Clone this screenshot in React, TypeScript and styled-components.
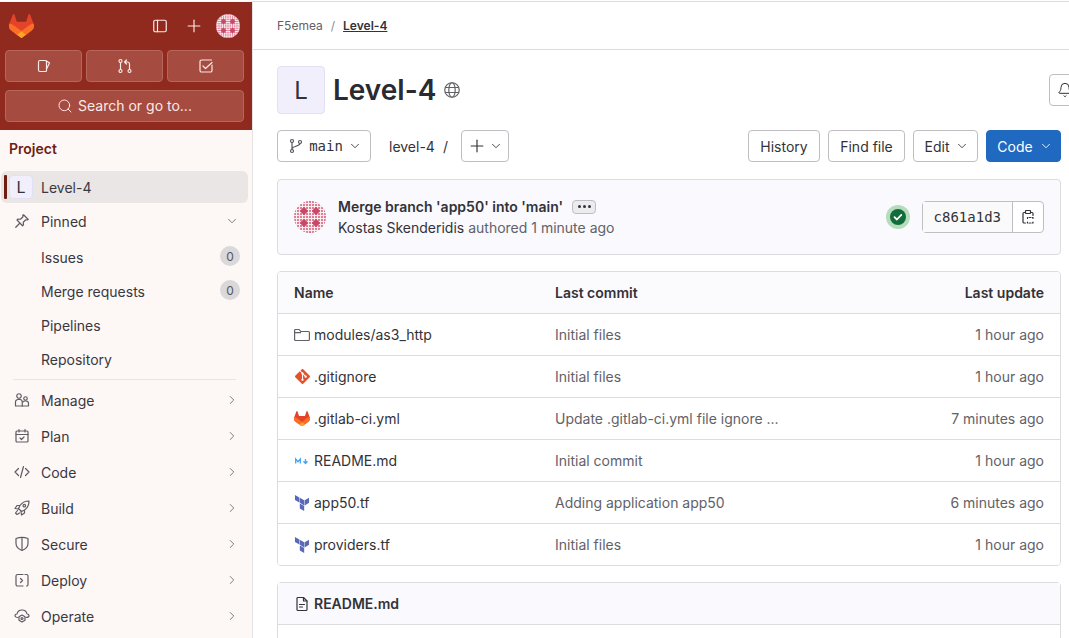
import React from 'react';
import styled, { createGlobalStyle } from 'styled-components';
import { ChevronDown, ChevronRight, Plus, Search, Bell } from 'lucide-react';
import { SiGit } from 'react-icons/si';

const GlobalStyle = createGlobalStyle`
  html, body {
    margin: 0;
    height: 100%;
    overflow: hidden;
    background: #fff;
    font-family: Inter, "Noto Sans", sans-serif;
    color: #333238;
  }
  #root {
    height: 100%;
  }
  * {
    box-sizing: border-box;
  }
`;

const Page = styled.div`
  display: flex;
  height: 638px;
  padding-top: 1px;
  overflow: hidden;
`;

const Sidebar = styled.aside`
  flex: 0 0 253px;
  background: #fdf7f6;
  border-right: 1px solid #e4e2e2;
  overflow: hidden;
`;

const SidebarTop = styled.div`
  background: #902a1e;
  height: 128px;
  margin-top: 1px;
  padding: 12px 8px 8px 5px;
`;

const TopRow = styled.div`
  display: flex;
  align-items: center;
  height: 24px;
  padding-left: 4px;
  color: #fbe9e6;
`;

const TopIcons = styled.div`
  display: flex;
  align-items: center;
  margin-left: auto;
  gap: 12px;
  padding-right: 4px;
`;

const PanelSlot = styled.span`
  display: flex;
  margin-right: 4px;
`;

const IconGrid = styled.div`
  display: grid;
  grid-template-columns: repeat(3, 77px);
  gap: 4px;
  margin-top: 12px;
`;

const HeaderButton = styled.button`
  display: flex;
  align-items: center;
  justify-content: center;
  gap: 5px;
  height: 32px;
  padding: 0;
  background: #a54b40;
  border: 1px solid #b7665c;
  border-radius: 4px;
  color: #fbe9e6;
  font: 400 14px Inter, sans-serif;
`;

const SearchButton = styled(HeaderButton)`
  width: 239px;
  margin-top: 8px;
  padding-bottom: 1px;
`;

const SectionTitle = styled.div`
  margin-top: 10px;
  padding-left: 9px;
  height: 18px;
  line-height: 18px;
  font-size: 14px;
  font-weight: 600;
  color: #6f1d12;
`;

const NavList = styled.nav`
  display: flex;
  flex-direction: column;
  margin-top: 13px;
  padding-left: 1px;
`;

const NavRow = styled.div<{ $height?: number; $active?: boolean }>`
  display: flex;
  align-items: center;
  height: ${(p) => p.$height ?? 36}px;
  width: 247px;
  padding: 0 9px 0 13px;
  border-radius: 6px;
  font-size: 14px;
  color: #3a383f;
  background: ${(p) => (p.$active ? '#e9e6e5' : 'transparent')};
`;

const ActiveRow = styled(NavRow)`
  padding-left: 3px;
`;

const PinnedRow = styled(NavRow)`
  margin-bottom: 1px;
`;

const ActiveBar = styled.span`
  width: 3px;
  height: 24px;
  border-radius: 1px;
  background: #6f1d12;
  margin-right: 2px;
`;

const NavIconSlot = styled.span`
  display: flex;
  flex: 0 0 16px;
  align-items: center;
  justify-content: center;
  margin-right: 11px;
  color: #5e5c63;
`;

const NavLabel = styled.span`
  flex: 1;
`;

const ActiveLabel = styled(NavLabel)`
  margin-left: 8px;
`;

const SubItem = styled(NavRow)`
  padding: 0 8px 0 40px;
`;

const CountBadge = styled.span`
  display: flex;
  align-items: center;
  justify-content: center;
  width: 20px;
  height: 20px;
  margin-top: -2px;
  border-radius: 50%;
  background: #d9d8da;
  color: #57555c;
  font-size: 12px;
`;

const NavDivider = styled.hr`
  width: 223px;
  margin: 3px 0 2px 12px;
  border: 0;
  border-top: 1px solid #e9e3e2;
`;

const ProjectTile = styled.span<{ $size: number }>`
  display: flex;
  flex: 0 0 auto;
  align-items: center;
  justify-content: center;
  width: ${(p) => p.$size}px;
  height: ${(p) => p.$size}px;
  border-radius: 4px;
  background: #f0effb;
  border: 1px solid #e2e0f3;
  color: #333238;
  font-size: ${(p) => (p.$size > 30 ? 24 : 16)}px;
`;

const Main = styled.main`
  flex: 1;
  min-width: 0;
  overflow: hidden;
  border-top: 1px solid #dcdcde;
`;

const Breadcrumbs = styled.div`
  display: flex;
  align-items: center;
  height: 48px;
  padding-left: 24px;
  border-bottom: 1px solid #dcdcde;
  font-size: 12px;
  color: #626168;
`;

const CrumbSep = styled.span`
  margin: 0 8px;
  color: #89888d;
`;

const CrumbCurrent = styled.span`
  color: #333238;
  font-weight: 600;
  text-decoration: underline;
`;

const Content = styled.div`
  padding: 16px 8px 0 24px;
`;

const TitleRow = styled.div`
  display: flex;
  align-items: center;
  height: 48px;
  margin-right: -20px;
`;

const Title = styled.h1`
  margin: 0 0 0 8px;
  font-size: 28px;
  font-weight: 600;
  color: #2b2a30;
`;

const GlobeWrap = styled.span`
  display: flex;
  margin-left: 8px;
  color: #626168;
`;

const BellButton = styled.button`
  display: flex;
  align-items: center;
  justify-content: center;
  width: 32px;
  height: 32px;
  margin-left: auto;
  padding: 0;
  background: #fff;
  border: 1px solid #bfbfc3;
  border-radius: 4px;
  color: #333238;
`;

const Toolbar = styled.div`
  display: flex;
  align-items: center;
  margin-top: 16px;
  height: 32px;
`;

const Button = styled.button<{ $width: number; $primary?: boolean; $gap?: number; $shift?: number }>`
  display: flex;
  align-items: center;
  justify-content: center;
  gap: ${(p) => p.$gap ?? 6}px;
  width: ${(p) => p.$width}px;
  height: 32px;
  padding: 0 0 0 ${(p) => p.$shift ?? 0}px;
  background: ${(p) => (p.$primary ? '#1f69c0' : '#fff')};
  border: 1px solid ${(p) => (p.$primary ? '#1f69c0' : '#bfbfc3')};
  border-radius: 4px;
  color: ${(p) => (p.$primary ? '#fff' : '#333238')};
  font: 400 14px Inter, sans-serif;
`;

const Mono = styled.span`
  font-family: "DejaVu Sans Mono", "Liberation Mono", monospace;
  font-size: 14px;
`;

const PathText = styled.span`
  margin-left: 18px;
  font-size: 14px;
  color: #333238;
`;

const PathSlash = styled.span`
  margin: 0 13px 0 8px;
  font-size: 14px;
`;

const ToolbarRight = styled.div`
  display: flex;
  gap: 8px;
  margin-left: auto;
`;

const CommitBox = styled.section`
  display: flex;
  align-items: center;
  height: 76px;
  margin-top: 17px;
  padding: 0 16px;
  background: #f9f9fe;
  border: 1px solid #dcdcde;
  border-radius: 4px;
`;

const CommitText = styled.div`
  margin-left: 12px;
  margin-top: -2px;
`;

const CommitTitle = styled.div`
  display: flex;
  align-items: center;
  gap: 9px;
  height: 20px;
  font-size: 14px;
  font-weight: 600;
`;

const Ellipsis = styled.span`
  display: flex;
  align-items: center;
  justify-content: center;
  gap: 2px;
  width: 24px;
  height: 14px;
  background: #ececef;
  border: 1px solid #bfbfc3;
  border-radius: 4px;
`;

const Dot = styled.i`
  width: 3px;
  height: 3px;
  border-radius: 50%;
  background: #333238;
`;

const CommitMeta = styled.div`
  margin-top: 2px;
  font-size: 14px;
  color: #626168;
`;

const Author = styled.span`
  color: #333238;
`;

const CommitRight = styled.div`
  display: flex;
  align-items: center;
  margin-left: auto;
`;

const StatusHalo = styled.span`
  display: flex;
  align-items: center;
  justify-content: center;
  width: 24px;
  height: 24px;
  margin-right: 12px;
  border-radius: 50%;
  background: #b5dcbc;
`;

const ShaGroup = styled.div`
  display: flex;
  height: 32px;
  background: #fff;
  border: 1px solid #bfbfc3;
  border-radius: 4px;
`;

const Sha = styled(Mono)`
  display: flex;
  align-items: center;
  padding: 0 11px;
  border-right: 1px solid #bfbfc3;
  background: #fafafa;
`;

const CopyCell = styled.span`
  display: flex;
  align-items: center;
  justify-content: center;
  width: 30px;
`;

const FileTable = styled.div`
  margin-top: 16px;
  border: 1px solid #dcdcde;
  border-radius: 4px;
  overflow: hidden;
`;

const FileRow = styled.div<{ $header?: boolean }>`
  display: grid;
  grid-template-columns: 261px 1fr auto;
  align-items: center;
  height: ${(p) => (p.$header ? 41 : 42)}px;
  padding: 0 16px;
  background: ${(p) => (p.$header ? '#fbfafd' : '#fff')};
  font-size: 14px;
  font-weight: ${(p) => (p.$header ? 600 : 400)};
  & + & {
    border-top: 1px solid #dcdcde;
  }
`;

const FileName = styled.span`
  display: flex;
  align-items: center;
  gap: 4px;
  color: #333238;
`;

const FileIconSlot = styled.span`
  display: flex;
  flex: 0 0 16px;
  align-items: center;
  justify-content: center;
`;

const Muted = styled.span`
  color: #626168;
`;

const ReadmeBox = styled.section`
  margin-top: 16px;
  height: 80px;
  border: 1px solid #dcdcde;
  border-radius: 4px;
`;

const ReadmeHeader = styled.div`
  display: flex;
  align-items: center;
  gap: 4px;
  height: 42px;
  padding: 0 16px;
  background: #f9f9fe;
  border-bottom: 1px solid #dcdcde;
  font-size: 14px;
  font-weight: 600;
`;

type IconProps = { size?: number; color?: string };

const Stroke: React.FC<React.PropsWithChildren<IconProps>> = ({ size = 16, color = 'currentColor', children }) => (
  <svg width={size} height={size} viewBox="0 0 16 16" fill="none" stroke={color} strokeWidth={1.2} strokeLinecap="round" strokeLinejoin="round">
    {children}
  </svg>
);

const Tanuki: React.FC<{ size?: number }> = ({ size = 25 }) => (
  <svg width={size} height={(size * 24) / 25} viewBox="0 0 25 24">
    <path fill="#E24329" d="m24.507 9.5-.034-.09L21.082.562a.896.896 0 0 0-1.694.091l-2.29 7.01H7.825L5.535.653a.898.898 0 0 0-1.694-.09L.451 9.411.416 9.5a6.297 6.297 0 0 0 2.09 7.278l.012.01.03.022 5.16 3.867 2.56 1.935 1.554 1.176a1.051 1.051 0 0 0 1.268 0l1.555-1.176 2.56-1.935 5.197-3.89.014-.01A6.297 6.297 0 0 0 24.507 9.5Z" />
    <path fill="#FC6D26" d="m24.507 9.5-.034-.09a11.44 11.44 0 0 0-4.56 2.051l-7.447 5.632 4.742 3.584 5.197-3.89.014-.01A6.297 6.297 0 0 0 24.507 9.5Z" />
    <path fill="#FCA326" d="m7.707 20.677 2.56 1.935 1.555 1.176a1.051 1.051 0 0 0 1.268 0l1.555-1.176 2.56-1.935-4.743-3.584-4.755 3.584Z" />
    <path fill="#FC6D26" d="M5.01 11.461a11.43 11.43 0 0 0-4.56-2.05L.416 9.5a6.297 6.297 0 0 0 2.09 7.278l.012.01.03.022 5.16 3.867 4.745-3.584-7.444-5.632Z" />
  </svg>
);

// the default identicon: a dot grid with four dark diamonds round the middle
const Identicon: React.FC<{ size: number }> = ({ size }) => {
  const dots: React.ReactNode[] = [];
  for (let y = 0; y < 11; y++) {
    for (let x = 0; x < 11; x++) {
      dots.push(<circle key={`${x}-${y}`} cx={x * 3 + 1} cy={y * 3 + 1} r={1.1} fill="#d8637f" />);
    }
  }
  const clipId = `avatar-clip-${size}`;
  return (
    <svg width={size} height={size} viewBox="0 0 32 32">
      <clipPath id={clipId}>
        <circle cx="16" cy="16" r="16" />
      </clipPath>
      <g clipPath={`url(#${clipId})`}>
        <rect width="32" height="32" fill="#fbeef1" />
        {dots}
        {[10, 22].map((cx) =>
          [10, 22].map((cy) => (
            <rect key={`${cx}-${cy}`} x={cx - 3} y={cy - 3} width="6" height="6" fill="#c9486a" transform={`rotate(45 ${cx} ${cy})`} />
          )),
        )}
      </g>
    </svg>
  );
};

const GlobeIcon = () => (
  <Stroke>
    <circle cx="8" cy="8" r="7.25" />
    <ellipse cx="8" cy="8" rx="3.2" ry="7.25" />
    <path d="M1.500 5.500h13M1.500 10.500h13" />
  </Stroke>
);

const PanelIcon = () => (
  <Stroke>
    <rect x="1.75" y="2.25" width="12.5" height="11.5" rx="1.5" />
    <path d="M5.5 2.25v11.5" />
  </Stroke>
);

const IssueIcon = () => (
  <Stroke>
    <path d="M2.5 4a1.5 1.5 0 0 1 1.5-1.5h5A1.5 1.5 0 0 1 10.5 4v8.5a1 1 0 0 1-1 1H4a1.5 1.5 0 0 1-1.5-1.5z" />
    <path d="M10.500 3l3 2-3 6" />
  </Stroke>
);

const MergeIcon = () => (
  <Stroke>
    <circle cx="3.5" cy="3" r="1.5" />
    <circle cx="3.5" cy="13" r="1.5" />
    <circle cx="12.5" cy="13" r="1.5" />
    <path d="M3.500 4.500v7M12.500 11.500V6a2 2 0 0 0-2-2H8M9.500 2 7.500 4l2 2" />
  </Stroke>
);

const TodoIcon = () => (
  <Stroke>
    <path d="M14 7v5.500a1.500 1.500 0 0 1-1.500 1.500h-9A1.500 1.500 0 0 1 2 12.500v-9A1.500 1.500 0 0 1 3.500 2h10" />
    <path d="m5 8 2.500 2.500L14 4.500" />
  </Stroke>
);

const PinIcon = () => (
  <Stroke>
    <path d="M9.500 1.750 14.250 6.500l-1 .500-1.500-.250-2.500 2.500.250 2.500-1 1L3 7l1-1 2.500.250 2.500-2.500-.250-1.500z" />
    <path d="M5.500 10.500 1.750 14.250" />
  </Stroke>
);

const PeopleIcon = () => (
  <Stroke>
    <circle cx="5" cy="4" r="2.250" />
    <path d="M1.500 14V10a2.500 2.500 0 0 1 2.500-2.500h2A2.500 2.500 0 0 1 8.250 10v4z" />
    <circle cx="11.500" cy="6.500" r="1.750" />
    <path d="M8.250 14h6.250v-2.500a2.500 2.500 0 0 0-2.500-2.500h-1a2.500 2.500 0 0 0-2 1" />
  </Stroke>
);

const PlanIcon = () => (
  <Stroke>
    <rect x="2" y="3" width="12" height="11" rx="1" />
    <path d="M2 6.500h12M5 1.500V4M11 1.500V4M6 10l1.500 1.500L10 9" />
  </Stroke>
);

const CodeIcon = () => (
  <Stroke>
    <path d="M4.500 4.500 1 8l3.500 3.500M11.500 4.500 15 8l-3.500 3.500M9.500 2.500l-3 11" />
  </Stroke>
);

const BuildIcon = () => (
  <Stroke>
    <path d="M15 1c-4 0-7 1.500-9 4.500L4.500 8.500l3 3 3-1.500C13.500 8 15 5 15 1z" />
    <circle cx="10.300" cy="5.700" r="1.250" />
    <path d="M5.500 5.500H3L1 8.500l3.500.500M10.500 10.500V13l-3 2-.500-3.500M3.500 10.500 1.500 13l1.500 1.500 2.500-1.500" />
  </Stroke>
);

const ShieldIcon = () => (
  <Stroke>
    <path d="M2 2.500c4-1.500 8-1.500 12 0v5c0 3-2.500 5.500-6 7-3.500-1.500-6-4-6-7z" />
    <path d="M8 2v12" />
  </Stroke>
);

const DeployIcon = () => (
  <Stroke>
    <path d="M2 6V4a1.500 1.500 0 0 1 1.500-1.500H9M2 6v6.500A1.500 1.500 0 0 0 3.500 14H9M14 4.500v8a1.500 1.500 0 0 1-1.500 1.500M11 2.500h1.500A1.500 1.500 0 0 1 14 4M6.500 6.500 8.500 8.500l-2 2" />
  </Stroke>
);

const OperateIcon = () => (
  <Stroke>
    <path d="M4 9.500C2 9.500 1 8.500 1 7.500 1 6.500 2 6 3 6c.5-2.500 2.500-4 5-4s4.500 1.500 5 4c1 0 2 .5 2 1.500s-1 2-3 2" />
    <path d="M8 7l3 1.750v3.500L8 14l-3-1.750v-3.500z" />
    <circle cx="8" cy="10.500" r="1" />
  </Stroke>
);

const FolderIcon = () => (
  <Stroke color="#626168">
    <path d="M.6 3.500a1 1 0 0 1 1-1h3.600l1.500 2h7.700a1 1 0 0 1 1 1v7a1 1 0 0 1-1 1H1.600a1 1 0 0 1-1-1z" />
    <path d="M.6 5.700h6" />
  </Stroke>
);

const MarkdownIcon = () => (
  <svg width="16" height="16" viewBox="0 0 16 16" fill="none" stroke="#42a5f5" strokeWidth="1.300">
    <path d="M1.700 10.500V6l2.300 2.700L6.300 6v4.500" />
    <path d="M11.500 6v4M9.500 8.300l2 2.200 2-2.200" />
  </svg>
);

const TerraformIcon = () => (
  <svg width="16" height="16" viewBox="0 0 24 24" fill="#5a68b8">
    <path d="M1.440 0v7.575l6.561 3.790V3.787zm21.120 4.227l-6.561 3.791v7.574l6.560-3.787zM8.720 4.230v7.575l6.561 3.787V8.018zm0 8.405v7.575L15.280 24v-7.578z" />
  </svg>
);

const ClipboardIcon = () => (
  <Stroke>
    <path d="M5.500 3.500H4a1 1 0 0 0-1 1V13a1 1 0 0 0 1 1h1.500M10.500 3.500H12a1 1 0 0 1 1 1v2" />
    <rect x="5.500" y="1.500" width="5" height="3" rx=".5" />
    <path d="M8 8.500h-.500v1M12 8.500h1v1M13 13v1h-1M8 14h-.500v-1M9.500 8.500h1M9.500 14h1" />
  </Stroke>
);

const BranchIcon = () => (
  <Stroke color="#56555c">
    <circle cx="4" cy="3" r="1.500" />
    <circle cx="4" cy="13" r="1.500" />
    <circle cx="12" cy="4" r="1.500" />
    <path d="M4 4.500v7M12 5.500c0 3-8 2.500-8 5.500" />
  </Stroke>
);

const DocIcon = () => (
  <Stroke>
    <path d="M3 2.500a1 1 0 0 1 1-1h5.500L13 5v8.500a1 1 0 0 1-1 1H4a1 1 0 0 1-1-1z" />
    <path d="M9.500 1.500V5H13M5.500 8.500h5M5.500 11h3" />
  </Stroke>
);

const StatusCheck = () => (
  <svg width="16" height="16" viewBox="0 0 16 16">
    <circle cx="8" cy="8" r="8" fill="#126b3a" />
    <path d="m4.500 8.200 2.400 2.300 4.400-4.600" fill="none" stroke="#fff" strokeWidth="1.800" strokeLinecap="round" strokeLinejoin="round" />
  </svg>
);

const sections: { label: string; icon: React.ReactNode }[] = [
  { label: 'Manage', icon: <PeopleIcon /> },
  { label: 'Plan', icon: <PlanIcon /> },
  { label: 'Code', icon: <CodeIcon /> },
  { label: 'Build', icon: <BuildIcon /> },
  { label: 'Secure', icon: <ShieldIcon /> },
  { label: 'Deploy', icon: <DeployIcon /> },
  { label: 'Operate', icon: <OperateIcon /> },
];

const files: { name: string; icon: React.ReactNode; commit: string; updated: string }[] = [
  { name: 'modules/as3_http', icon: <FolderIcon />, commit: 'Initial files', updated: '1 hour ago' },
  { name: '.gitignore', icon: <SiGit size={15} color="#e2512d" />, commit: 'Initial files', updated: '1 hour ago' },
  { name: '.gitlab-ci.yml', icon: <Tanuki size={16} />, commit: 'Update .gitlab-ci.yml file ignore ...', updated: '7 minutes ago' },
  { name: 'README.md', icon: <MarkdownIcon />, commit: 'Initial commit', updated: '1 hour ago' },
  { name: 'app50.tf', icon: <TerraformIcon />, commit: 'Adding application app50', updated: '6 minutes ago' },
  { name: 'providers.tf', icon: <TerraformIcon />, commit: 'Initial files', updated: '1 hour ago' },
];

export default function App() {
  return (
    <>
      <GlobalStyle />
      <Page>
        <Sidebar>
          <SidebarTop>
            <TopRow>
              <Tanuki />
              <TopIcons>
                <PanelSlot><PanelIcon /></PanelSlot>
                <Plus size={20} strokeWidth={1.4} />
                <Identicon size={24} />
              </TopIcons>
            </TopRow>
            <IconGrid>
              <HeaderButton aria-label="Issues"><IssueIcon /></HeaderButton>
              <HeaderButton aria-label="Merge requests"><MergeIcon /></HeaderButton>
              <HeaderButton aria-label="To-do items"><TodoIcon /></HeaderButton>
            </IconGrid>
            <SearchButton>
              <Search size={16} strokeWidth={1.5} />
              Search or go to...
            </SearchButton>
          </SidebarTop>
          <SectionTitle>Project</SectionTitle>
          <NavList>
            <ActiveRow $height={32} $active>
              <ActiveBar />
              <ProjectTile $size={24}>L</ProjectTile>
              <ActiveLabel>Level-4</ActiveLabel>
            </ActiveRow>
            <PinnedRow>
              <NavIconSlot><PinIcon /></NavIconSlot>
              <NavLabel>Pinned</NavLabel>
              <ChevronDown size={14} strokeWidth={1.5} color="#6a6870" />
            </PinnedRow>
            <SubItem $height={34}>
              <NavLabel>Issues</NavLabel>
              <CountBadge>0</CountBadge>
            </SubItem>
            <SubItem $height={34}>
              <NavLabel>Merge requests</NavLabel>
              <CountBadge>0</CountBadge>
            </SubItem>
            <SubItem $height={34}><NavLabel>Pipelines</NavLabel></SubItem>
            <SubItem $height={34}><NavLabel>Repository</NavLabel></SubItem>
            <NavDivider />
            {sections.map((s) => (
              <NavRow key={s.label}>
                <NavIconSlot>{s.icon}</NavIconSlot>
                <NavLabel>{s.label}</NavLabel>
                <ChevronRight size={14} strokeWidth={1.5} color="#6a6870" />
              </NavRow>
            ))}
          </NavList>
        </Sidebar>
        <Main>
          <Breadcrumbs>
            <span>F5emea</span>
            <CrumbSep>/</CrumbSep>
            <CrumbCurrent>Level-4</CrumbCurrent>
          </Breadcrumbs>
          <Content>
            <TitleRow>
              <ProjectTile $size={48}>L</ProjectTile>
              <Title>Level-4</Title>
              <GlobeWrap><GlobeIcon /></GlobeWrap>
              <BellButton aria-label="Notifications"><Bell size={16} strokeWidth={1.5} /></BellButton>
            </TitleRow>
            <Toolbar>
              <Button $width={94} $gap={5} $shift={2}>
                <BranchIcon />
                <Mono>main</Mono>
                <ChevronDown size={14} strokeWidth={1.5} />
              </Button>
              <PathText>level-4</PathText>
              <PathSlash>/</PathSlash>
              <Button $width={48} $gap={2}>
                <Plus size={20} strokeWidth={1.4} />
                <ChevronDown size={14} strokeWidth={1.5} />
              </Button>
              <ToolbarRight>
                <Button $width={72}>History</Button>
                <Button $width={77}>Find file</Button>
                <Button $width={65} $shift={3}>
                  Edit
                  <ChevronDown size={14} strokeWidth={1.5} />
                </Button>
                <Button $width={75} $primary $shift={3}>
                  Code
                  <ChevronDown size={14} strokeWidth={1.5} />
                </Button>
              </ToolbarRight>
            </Toolbar>
            <CommitBox>
              <Identicon size={32} />
              <CommitText>
                <CommitTitle>
                  Merge branch 'app50' into 'main'
                  <Ellipsis><Dot /><Dot /><Dot /></Ellipsis>
                </CommitTitle>
                <CommitMeta><Author>Kostas Skenderidis</Author> authored 1 minute ago</CommitMeta>
              </CommitText>
              <CommitRight>
                <StatusHalo><StatusCheck /></StatusHalo>
                <ShaGroup>
                  <Sha>c861a1d3</Sha>
                  <CopyCell><ClipboardIcon /></CopyCell>
                </ShaGroup>
              </CommitRight>
            </CommitBox>
            <FileTable>
              <FileRow $header>
                <span>Name</span>
                <span>Last commit</span>
                <span>Last update</span>
              </FileRow>
              {files.map((f) => (
                <FileRow key={f.name}>
                  <FileName>
                    <FileIconSlot>{f.icon}</FileIconSlot>
                    {f.name}
                  </FileName>
                  <Muted>{f.commit}</Muted>
                  <Muted>{f.updated}</Muted>
                </FileRow>
              ))}
            </FileTable>
            <ReadmeBox>
              <ReadmeHeader>
                <DocIcon />
                README.md
              </ReadmeHeader>
            </ReadmeBox>
          </Content>
        </Main>
      </Page>
    </>
  );
}
